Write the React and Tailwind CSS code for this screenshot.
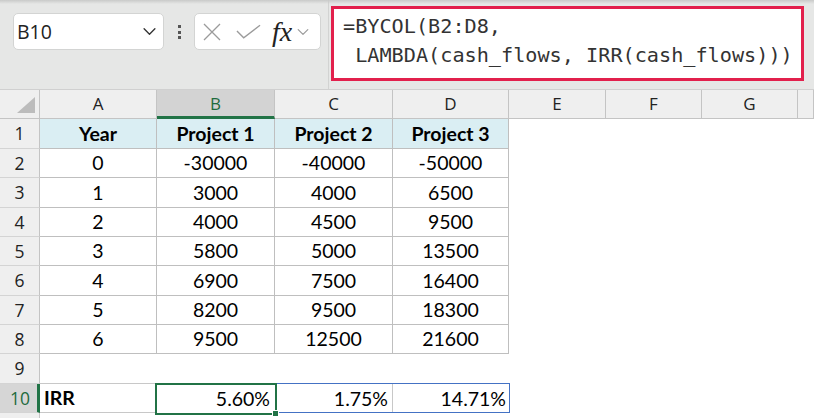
import React from 'react';

const COLS = [
  { key: 'A', w: 117 },
  { key: 'B', w: 118 },
  { key: 'C', w: 118 },
  { key: 'D', w: 116 },
  { key: 'E', w: 97 },
  { key: 'F', w: 96 },
  { key: 'G', w: 96 },
  { key: '', w: 16 },
];

// row heights incl. bottom border, picked to land lines where the screenshot has them
const ROW_H = ['h-[30px]', 'h-[29px]', 'h-[30px]', 'h-[29px]', 'h-[29px]', 'h-[30px]', 'h-[29px]', 'h-[29px]', 'h-[30px]', 'h-[29px]', 'h-[29px]'];
const COL_W = ['w-[117px]', 'w-[118px]', 'w-[118px]', 'w-[116px]', 'w-[97px]', 'w-[96px]', 'w-[96px]', 'w-[16px]'];

const DATA = [
  ['Year', 'Project 1', 'Project 2', 'Project 3'],
  ['0', '-30000', '-40000', '-50000'],
  ['1', '3000', '4000', '6500'],
  ['2', '4000', '4500', '9500'],
  ['3', '5800', '5000', '13500'],
  ['4', '6900', '7500', '16400'],
  ['5', '8200', '9500', '18300'],
  ['6', '9500', '12500', '21600'],
];

const uiFont = { fontFamily: '"Open Sans", "Noto Sans", sans-serif' };
const cellFont = { fontFamily: 'Lato, "Open Sans", sans-serif' };

function Chevron({ className }) {
  return (
    <svg viewBox="0 0 16 10" className={className} fill="none" stroke="currentColor" strokeWidth="1.5" strokeLinecap="round" strokeLinejoin="round">
      <path d="M2 2l6 6 6-6" />
    </svg>
  );
}

function FormulaBar() {
  return (
    <div className="relative flex h-[89px] bg-[#e6e7e6]" style={uiFont}>
      <div className="absolute left-0 right-0 top-0 h-[4px] bg-gradient-to-b from-[#c9cac9] to-transparent" />
      {/* name box */}
      <div className="ml-[13px] mt-[13px] flex h-[37px] w-[151px] items-center justify-between rounded-[5px] border border-[#d3d4d3] bg-white pl-[3px] pr-[6px]">
        <span className="text-[19.5px] leading-none text-[#222]">B10</span>
        <Chevron className="h-[9px] w-[15px] text-[#333]" />
      </div>
      {/* grip dots */}
      <div className="ml-[14px] mt-[25px] flex flex-col gap-[2.5px]">
        <span className="block h-[3px] w-[3px] bg-[#555]" />
        <span className="block h-[3px] w-[3px] bg-[#555]" />
        <span className="block h-[3px] w-[3px] bg-[#555]" />
      </div>
      {/* cancel / enter / fx */}
      <div className="ml-[13px] mt-[13px] flex h-[37px] w-[127px] items-center rounded-[5px] border border-[#d3d4d3] bg-white pl-[8px]">
        <svg viewBox="0 0 18 18" className="h-[18px] w-[18px]" fill="none" stroke="#9b9b9b" strokeWidth="1.3">
          <path d="M1 1l16 16M17 1L1 17" />
        </svg>
        <svg viewBox="0 0 26 15" className="ml-[15px] h-[15px] w-[25px]" fill="none" stroke="#9b9b9b" strokeWidth="1.4">
          <path d="M1 7l7 7L25 1" />
        </svg>
        <span className="ml-[11px] text-[28px] italic leading-none text-[#222]" style={{ fontFamily: '"Liberation Serif", "DejaVu Serif", serif' }}>
          fx
        </span>
        <Chevron className="ml-[4px] h-[8px] w-[14px] text-[#9b9b9b]" />
      </div>
      {/* formula text */}
      <div className="ml-[7px] flex-1 border-l border-[#d2d3d2] pl-[2px]">
        <div className="mt-[6px] h-[75px] w-[473px] border-[3.5px] border-[#e2204c] bg-white pl-[9px] pt-[3px]">
          <pre className="text-[20.2px] leading-[28.5px] text-[#333]" style={{ fontFamily: '"DejaVu Sans Mono", "Liberation Mono", monospace' }}>
{`=BYCOL(B2:D8,
 LAMBDA(cash_flows, IRR(cash_flows)))`}
          </pre>
        </div>
      </div>
    </div>
  );
}

function ColumnHeader() {
  return (
    <div className="flex h-[30px] border-t border-[#d0d0d0] bg-[#efefef]" style={uiFont}>
      <div className="relative w-[40px] shrink-0 border-r border-b border-[#c4c4c4]">
        <svg viewBox="0 0 18 16" className="absolute left-[17px] top-[7px] h-[16px] w-[18px]">
          <polygon points="18,0 18,16 0,16" fill="#bcbcbc" />
        </svg>
      </div>
      {COLS.map((c, i) => {
        const sel = c.key === 'B';
        return (
          <div
            key={i}
            className={`${COL_W[i]} flex shrink-0 items-center justify-center border-r text-[17px] ${
              sel
                ? 'border-b-[3px] border-r-[#c4c4c4] border-b-[#217346] bg-[#d3d3d3] pt-[2px] text-[#1e6b3d]'
                : 'border-b border-[#c4c4c4] text-[#222]'
            }`}
          >
            {c.key}
          </div>
        );
      })}
    </div>
  );
}

function RowHeader({ n, h, selected }) {
  return (
    <div
      className={`${h} flex w-[40px] shrink-0 items-center justify-center border-b border-[#d4d4d4] text-[17.5px] ${
        selected ? 'border-r-[3px] border-r-[#217346] bg-[#d6d6d6] pl-[3px] text-[#1e6b3d]' : 'border-r border-r-[#c4c4c4] bg-[#efefef] text-[#222]'
      }`}
      style={uiFont}
    >
      {n}
    </div>
  );
}

function DataRow({ r, vals, h }) {
  const head = r === 0;
  return (
    <div className="flex" style={cellFont}>
      <RowHeader n={r + 1} h={h} />
      {COLS.map((c, i) => {
        const inTable = i < 4;
        return (
          <div
            key={i}
            className={`${COL_W[i]} ${h} flex shrink-0 items-center justify-center text-[19.5px] text-black ${
              inTable ? 'border-r border-b border-[#bfbfbf]' : ''
            } ${inTable && head ? 'bg-[#daeef3] font-bold' : ''}`}
          >
            {inTable ? vals[i] : ''}
          </div>
        );
      })}
    </div>
  );
}

export default function App() {
  return (
    <div className="h-[418px] w-[814px] overflow-hidden bg-white">
      <FormulaBar />
      <ColumnHeader />
      {DATA.map((vals, r) => (
        <DataRow key={r} r={r} vals={vals} h={ROW_H[r]} />
      ))}

      {/* row 9 */}
      <div className="flex">
        <RowHeader n={9} h={ROW_H[8]} />
        <div className={`${COL_W[0]} ${ROW_H[8]} shrink-0 border-b border-[#c8c8c8]`} />
      </div>

      {/* row 10 with selection */}
      <div className="relative flex text-[19.5px] text-black" style={cellFont}>
        <RowHeader n={10} h={ROW_H[9]} selected />
        <div className={`${COL_W[0]} ${ROW_H[9]} flex shrink-0 items-center border-b border-[#c8c8c8] pl-[4px] font-bold`}>IRR</div>
        <div className={`${COL_W[1]} ${ROW_H[9]} flex shrink-0 items-center justify-end pr-[5px]`}>5.60%</div>
        <div className={`${COL_W[2]} ${ROW_H[9]} flex shrink-0 items-center justify-end border-r border-[#c8c8c8] pr-[4px]`}>1.75%</div>
        <div className={`${COL_W[3]} ${ROW_H[9]} flex shrink-0 items-center justify-end pr-[3px]`}>14.71%</div>

        {/* spill range outline */}
        <div className="pointer-events-none absolute left-[275px] top-[-1px] h-[30px] w-[235px] border-[1.5px] border-[#4472c4]" />
        {/* active cell */}
        <div className="pointer-events-none absolute left-[155px] top-[-1px] h-[32px] w-[122px] border-[2.5px] border-[#217346]">
          <span className="absolute -bottom-[4px] -right-[4px] block h-[7px] w-[7px] border border-white bg-[#217346]" />
        </div>
      </div>

      {/* row 11 peeking */}
      <div className="flex">
        <RowHeader n="" h={ROW_H[10]} />
      </div>
    </div>
  );
}
